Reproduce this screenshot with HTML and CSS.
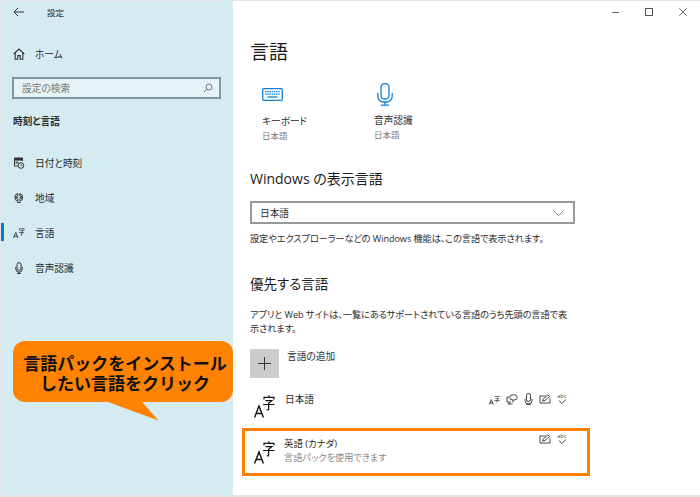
FILE: index.html
```html
<!DOCTYPE html>
<html lang="ja">
<head>
<meta charset="utf-8">
<title>設定</title>
<link rel="stylesheet" href="styles.css">
</head>
<body>
<div class="window">
  <aside class="sidebar">
    <div class="titlebar">
      <svg class="back" width="12" height="10" viewBox="0 0 12 10"><path d="M5 1 1 5l4 4M1 5h10" fill="none" stroke="#333" stroke-width="1"/></svg>
      <span class="title">設定</span>
    </div>
    <div class="nav-row home">
      <svg class="nav-icon" width="12" height="12" viewBox="0 0 12 12"><path d="M.7 6 6 1l5.3 5M2.2 5v6.3h2.6V7.6h2.400v3.700h2.600V5" fill="none" stroke="#333" stroke-width="1.100"/></svg>
      <span>ホーム</span>
    </div>
    <div class="search">
      <span>設定の検索</span>
      <svg width="10" height="10" viewBox="0 0 10 10"><circle cx="6" cy="4" r="3" fill="none" stroke="#666" stroke-width=".9"/><path d="M3.8 6.2 1 9" stroke="#666" stroke-width=".9"/></svg>
    </div>
    <div class="group">時刻と言語</div>
    <nav class="nav">
      <div class="nav-row">
        <svg class="nav-icon" width="12" height="12" viewBox="0 0 12 12"><path d="M1.5 9V1h8v3" fill="none" stroke="#333"/><rect x="1.5" y="1" width="8" height="2.6" fill="#333"/><path d="M1.5 9H5" stroke="#333"/><rect x="2.5" y="4.6" width="3" height="2" fill="#555"/><circle cx="8" cy="8.5" r="2.8" fill="none" stroke="#333"/><path d="M8 7v1.6h1.4" fill="none" stroke="#333" stroke-width=".7"/></svg>
        <span>日付と時刻</span>
      </div>
      <div class="nav-row">
        <svg class="nav-icon" width="12" height="12" viewBox="0 0 12 12"><circle cx="5.8" cy="5.4" r="4.4" fill="#555"/><path d="M3 3l5.500 5M8.500 3 3 8M5.800 1v9" stroke="#d4ebf2" stroke-width=".9"/><path d="M4.200 10.500h3.200" stroke="#333" stroke-width="1"/></svg>
        <span>地域</span>
      </div>
      <div class="nav-row active">
        <svg class="nav-icon" width="12" height="12" viewBox="0 0 12 12"><path d="M.5 11 2.800 5.400 5 11M1.300 9.300h3" fill="none" stroke="#333" stroke-width=".9"/><path d="M6.500 3.200V1.800h4.600v1.400M7.300 3.600h3L8.700 5v3l-1 .2M6.200 5.600h5" fill="none" stroke="#333" stroke-width=".8"/></svg>
        <span>言語</span>
      </div>
      <div class="nav-row">
        <svg class="nav-icon" width="12" height="12" viewBox="0 0 12 12"><rect x="4" y=".6" width="4" height="7.600" rx="2" fill="none" stroke="#333"/><path d="M2.800 5v2a3.200 3.200 0 0 0 6.400 0V5M6 10v1.500M4.200 11.500h3.600" fill="none" stroke="#333"/></svg>
        <span>音声認識</span>
      </div>
    </nav>
  </aside>
  <main class="content">
    <div class="controls">
      <span class="ctl-min"></span>
      <span class="ctl-max"></span>
      <svg width="8" height="8" viewBox="0 0 8 8"><path d="M.3.3l7.400 7.400M7.700.3.300 7.700" stroke="#555" stroke-width=".9"/></svg>
    </div>
    <h1>言語</h1>
    <div class="features">
      <div class="feature">
        <svg class="feature-icon" width="21" height="13" viewBox="0 0 21 13"><rect x=".7" y=".7" width="19.600" height="11.600" rx="1.200" fill="none" stroke="#0f7fd8" stroke-width="1.300"/><path d="M3 3.600h15M3 6.200h15" stroke="#0f7fd8" stroke-width="1.300" stroke-dasharray="1.500 .7"/><path d="M5.500 9h10" stroke="#0f7fd8" stroke-width="1.300"/></svg>
        <div class="feature-name">キーボード</div>
        <div class="feature-sub">日本語</div>
      </div>
      <div class="feature">
        <svg class="feature-icon mic" width="16" height="23" viewBox="0 0 16 23"><rect x="4" y=".7" width="8" height="15.300" rx="3.600" fill="none" stroke="#0f7fd8" stroke-width="1.300"/><path d="M.8 10v3.200a5.800 5.800 0 0 0 5.800 5.800h2.800a5.800 5.800 0 0 0 5.800-5.800V10M8 19v3M4 22.200h8" fill="none" stroke="#0f7fd8" stroke-width="1.300"/></svg>
        <div class="feature-name">音声認識</div>
        <div class="feature-sub">日本語</div>
      </div>
    </div>
    <h2 class="h-display">Windows の表示言語</h2>
    <div class="select">
      <span>日本語</span>
      <svg width="11" height="6" viewBox="0 0 11 6"><path d="M.5.5l5 5 5-5" fill="none" stroke="#777" stroke-width=".9"/></svg>
    </div>
    <p class="note">設定やエクスプローラーなどの Windows 機能は、この言語で表示されます。</p>
    <h2 class="h-pref">優先する言語</h2>
    <p class="desc">アプリと Web サイトは、一覧にあるサポートされている言語のうち先頭の言語で表<br>示されます。</p>
    <div class="add">
      <span class="add-box"><svg width="13" height="13" viewBox="0 0 13 13"><path d="M6.500 0v13M0 6.500h13" stroke="#333" stroke-width="1"/></svg></span>
      <span class="add-label">言語の追加</span>
    </div>
    <div class="lang">
      <svg class="lang-icon" width="21" height="23" viewBox="0 0 21 23"><path d="M.6 22.500 5 11 9.400 22.500M2.100 18.500h5.800" fill="none" stroke="#111" stroke-width="1.400"/><path d="M10 4.500V2.300h10V4.500M11.500 5.700h6.300l-3.200 2.700v6.200l-2 .2M9.100 9.500h11.400M15 .2v2.200" fill="none" stroke="#111" stroke-width="1.200"/></svg>
      <div class="lang-text"><div class="lang-name">日本語</div></div>
      <div class="caps">
        <svg width="11" height="11" viewBox="0 0 11 11"><path d="M.3 10.500 2.300 5.500 4.300 10.500M1 9h2.600" fill="none" stroke="#333" stroke-width=".9"/><path d="M5.500 2.500h5M6.500 4.500h3L8 6v2.500M5.500 6.500h5" fill="none" stroke="#444" stroke-width=".8"/></svg>
        <svg width="12" height="11" viewBox="0 0 12 11"><path d="M5 8H1V3h2M3.500 8.500v1.500M1.500 10h5" fill="none" stroke="#333" stroke-width=".9"/><ellipse cx="7.500" cy="3.400" rx="3.800" ry="2.700" fill="none" stroke="#333" stroke-width=".9"/><path d="M7 6v2.500" stroke="#333" stroke-width=".9"/></svg>
        <svg width="9" height="12" viewBox="0 0 9 12"><rect x="2.500" y=".5" width="4" height="8" rx="2" fill="none" stroke="#333"/><path d="M1 6v1.500a3.500 3.500 0 0 0 7 0V6M4.500 10.500v1M2.500 11.500h4" fill="none" stroke="#333" stroke-width=".9"/></svg>
        <svg class="pen" width="12" height="10" viewBox="0 0 12 10"><path d="M6.500 2H1v7h10V4.500" fill="none" stroke="#333" stroke-width=".9"/><path d="M3.500 7 4 5.200 8.800 1 10.800 2.400 6 6.500z" fill="none" stroke="#333" stroke-width=".9"/></svg>
        <svg class="abc" width="10" height="12" viewBox="0 0 10 12"><text class="abc-text" x="5" y="5" text-anchor="middle">abc</text><path d="M2 7.500l2.500 3L9 6.500" fill="none" stroke="#333" stroke-width=".9"/></svg>
      </div>
    </div>
    <div class="lang selected">
      <svg class="lang-icon" width="21" height="23" viewBox="0 0 21 23"><path d="M.6 22.500 5 11 9.400 22.500M2.100 18.500h5.800" fill="none" stroke="#111" stroke-width="1.400"/><path d="M10 4.500V2.300h10V4.500M11.500 5.700h6.300l-3.200 2.700v6.200l-2 .2M9.100 9.500h11.400M15 .2v2.200" fill="none" stroke="#111" stroke-width="1.200"/></svg>
      <div class="lang-text">
        <div class="lang-name">英語 (カナダ)</div>
        <div class="lang-sub">言語パックを使用できます</div>
      </div>
      <div class="caps">
        <svg class="pen" width="12" height="10" viewBox="0 0 12 10"><path d="M6.500 2H1v7h10V4.500" fill="none" stroke="#333" stroke-width=".9"/><path d="M3.500 7 4 5.200 8.800 1 10.800 2.400 6 6.500z" fill="none" stroke="#333" stroke-width=".9"/></svg>
        <svg class="abc" width="10" height="12" viewBox="0 0 10 12"><text class="abc-text" x="5" y="5" text-anchor="middle">abc</text><path d="M2 7.500l2.500 3L9 6.500" fill="none" stroke="#333" stroke-width=".9"/></svg>
      </div>
    </div>
  </main>
  <div class="callout">言語パックをインストール<br>したい言語をクリック</div>
  <svg class="callout-tail" width="52" height="20" viewBox="0 0 52 20"><path d="M0 0H34L50.500 18.500Z" fill="#ff8200"/></svg>
</div>
</body>
</html>
```

FILE: styles.css
```css
*, *::before { box-sizing: border-box; }
html, body { margin: 0; padding: 0; }
body {
  width: 700px;
  height: 497px;
  overflow: hidden;
  font-family: "Open Sans", "Noto Sans CJK JP", sans-serif;
  font-feature-settings: "palt";
  color: #2b2b2b;
  background: #fff;
}
.window {
  position: relative;
  display: flex;
  width: 700px;
  height: 497px;
  border-left: 1px solid #e4e4e4;
  border-top: 1px solid #e4e4e4;
  border-bottom: 2px solid #e4e4e4;
}
.sidebar {
  width: 232px;
  padding-left: 1px;
  background: #d4ebf2;
  flex: none;
  font-size: 9.700px;
}
.titlebar {
  display: flex;
  align-items: center;
  height: 22px;
  padding-left: 11px;
}
.title { margin-left: 22px; font-size: 8.500px; }
.nav-row {
  position: relative;
  display: flex;
  align-items: center;
  height: 35px;
  padding-left: 11px;
}
.nav-icon { flex: none; margin-right: 10px; }
.home { margin-top: 13px; }
.search {
  display: flex;
  align-items: center;
  justify-content: space-between;
  width: 209px;
  height: 22px;
  margin: 6px 0 0 10px;
  padding: 0 6px 0 8px;
  border: 2px solid #7f9aa0;
  background: #e5f2f7;
  color: #777;
}
.group {
  margin: 16px 0 0 11px;
  font-weight: 700;
  line-height: 14px;
}
.nav { margin-top: 16px; }
.active::before {
  content: "";
  position: absolute;
  left: -1px;
  top: 8px;
  width: 3px;
  height: 18px;
  background: #0a78d7;
}
.content {
  flex: 1;
  padding-left: 17px;
  font-size: 9.700px;
  min-width: 0;
}
.controls {
  display: flex;
  align-items: center;
  justify-content: flex-end;
  gap: 26px;
  height: 22px;
  padding-right: 13px;
}
.ctl-min { width: 7px; height: 1px; background: #666; }
.ctl-max { width: 8px; height: 8px; border: 1px solid #555; }
h1 {
  margin: 16px 0 0;
  font-size: 19px;
  font-weight: 400;
  line-height: 26px;
  color: #1a1a1a;
}
.features { display: flex; margin-top: 18px; }
.feature { width: 124px; height: 67px; }
.feature-icon { display: block; margin: 5px 0 14px 12px; }
.feature-icon.mic { margin: 0 0 8px 3px; }
.feature-name { line-height: 14px; padding-left: 12px; }
.feature-sub { font-size: 8.500px; line-height: 13px; color: #777; padding-left: 12px; }
.feature:last-child .feature-name, .feature:last-child .feature-sub { padding-left: 0; }
h2 { margin: 0; font-weight: 400; color: #1a1a1a; }
.h-display { font-size: 14px; line-height: 20px; margin-top: 19px; }
.select {
  display: flex;
  align-items: center;
  justify-content: space-between;
  width: 325px;
  height: 23px;
  margin-top: 12px;
  padding: 0 9px 0 8px;
  border: 2px solid #999;
}
.note { margin: 8px 0 0; font-size: 9.200px; letter-spacing: -.1px; line-height: 14px; }
.h-pref { font-size: 13.500px; line-height: 20px; margin-top: 28px; }
.desc { width: 340px; margin: 14px 0 0; font-size: 9.200px; letter-spacing: -.1px; line-height: 14px; }
.add { display: flex; margin-top: 13px; height: 30px; }
.add-box {
  display: flex;
  align-items: center;
  justify-content: center;
  width: 29px;
  height: 29px;
  background: #cccccc;
}
.add-label { margin: 1px 0 0 8px; line-height: 14px; }
.lang {
  position: relative;
  display: flex;
  width: 317px;
  height: 49px;
}
.lang-icon { flex: none; margin: 16px 0 0 4px; }
.lang-text { margin: 14px 0 0 10px; }
.lang-name { line-height: 14px; }
.lang-sub { font-size: 9.200px; line-height: 14px; color: #888; }
.caps {
  display: flex;
  align-items: center;
  gap: 6px;
  margin-left: auto;
  height: 12px;
  margin-top: 14px;
}
.abc-text { font-size: 5.500px; fill: #444; }
.selected .lang-name { font-size: 9.400px; }
.selected .lang-icon { margin-top: 13px; }
.selected .lang-text { margin: 9px 0 0 9px; }
.selected .caps { margin-top: 5px; }
.selected::before {
  content: "";
  position: absolute;
  left: -8px;
  top: 0;
  width: 348px;
  height: 48px;
  border: 3px solid #ff8000;
}
.callout {
  position: absolute;
  left: 12px;
  top: 340px;
  width: 220px;
  height: 61px;
  padding: 13px 0 0 4px;
  border-radius: 12px;
  background: #ff8200;
  color: #111;
  font-size: 17px;
  font-weight: 700;
  font-feature-settings: normal;
  line-height: 20px;
  text-align: center;
}
.callout-tail { position: absolute; left: 107px; top: 401px; }
```
